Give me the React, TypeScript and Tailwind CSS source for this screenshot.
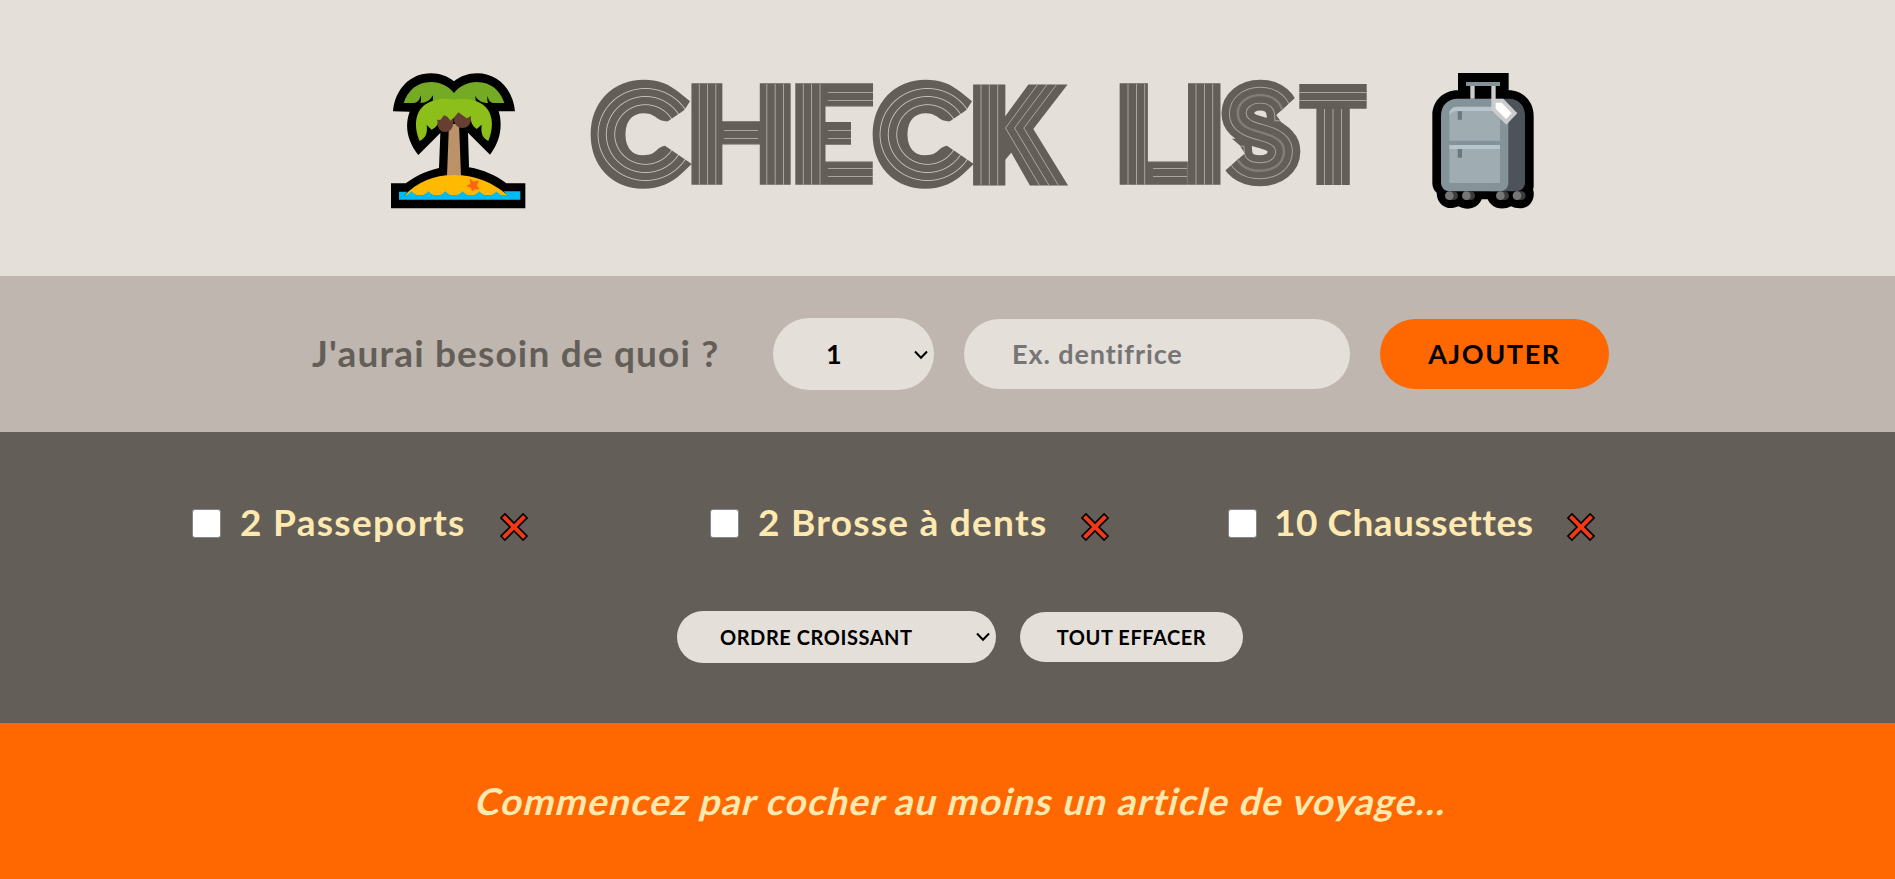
import React from "react";

const DARK = "#635f58";
const LIGHT = "#e5dfd9";
const GROOVE = "#aaa59e";

function PalmIsland() {
  return (
    <svg className="h-[180px] w-[180px] shrink-0" viewBox="0 0 540 540" aria-hidden="true">
      <path
        fill="#000"
        d="M69 184C75 118 120 70 183 70c27 0 51 9 69 24c18-15 42-24 69-24c63 0 108 48 114 114h-49c12 38 7 88-26 130l-66-66l3 104c44 8 79 23 112 48h57v75H63v-75h44c31-22 60-37 100-46l4-105l-66 66c-33-42-42-87-26-130z"
      />
      <path fill="#75aa25" d="M101 159c12-37 40-63 82-63c29 0 52 12 69 33c17-21 40-33 69-33c42 0 70 26 82 63h-32c-12-2-17-11-18-22c-2 10-1 16 1 22c-17 0-32-8-38-22c0 8 1 14 3 19H187c2-5 3-11 1-20c-6 15-20 23-37 23c2-7 3-13 0-23c-1 13-7 21-18 23z" />
      <path fill="#bc9269" d="M237 222h30l6 155h-42z" />
      <path fill="#643f32" d="M201 209l20-16l25 0c9 22 5 53-20 53c-15 0-26-14-25-37zM252 205l13-22l38 18c1 20-9 33-26 33c-15 0-26-11-25-29z" />
      <path fill="#8dbf1b" d="M149 273c-22-53-12-106 41-121c22-6 45-7 62-3c17-4 40-3 62 3c53 15 63 68 41 121c-18-10-23-23-20-49l-15 13c-13-9-19-21-17-38l-13 6l-25-18l-14 18c-4 2-7 4-9 7l-10-12l-10-4l-11 14l-10-1c5 12 1 21-16 30l-15-14c3 22-1 38-21 48z" />
      <path fill="#ffb900" d="M102 437c39-40 89-62 149-62c64 0 116 21 162 62z" />
      <path fill="#00bcf2" d="M87 425h25l-10 12q14-2 22-13q26 26 51 0q25 26 51 0q26 26 52 0q25 26 50 0q26 26 52 0q9 12 21 12l0 0h11l-12-12h51v25H87z" />
      <path fill="#ffb900" d="M380 412l33 24c-12 0-24-2-33-12z" />
      <path fill="#ff6210" stroke="#ff6210" strokeWidth="3" strokeLinejoin="round" d="M301 387l9 10l15-4l-6 13l8 11l-13-1l-7 7l-3-11l-12-4l11-6z" />
    </svg>
  );
}

function Suitcase() {
  return (
    <svg className="h-[180px] w-[180px] shrink-0" viewBox="0 0 540 540" aria-hidden="true">
      <path
        fill="#000"
        d="M174 69h152v52c42 0 75 32 75 76v215c-2 5-2 8 0 14c3 27-15 49-41 49c-11 0-20-2-27-6c-27 14-58 6-70-21h-18c-11 27-42 36-70 21c-31 15-65-3-65-41c-9-8-13-18-13-30V197c0-44 32-76 77-76z"
      />
      <path fill="#4c535b" d="M270 146h56c31 0 49 22 49 51v200c0 16-11 27-26 27h-79z" />
      <path fill="#849399" d="M173 146h103c31 0 49 22 49 51v200c0 16-10 27-26 27H150c-16 0-27-10-27-27V197c0-31 20-51 50-51z" />
      <path fill="#9facb2" d="M148 183h152v89H148zM148 297h152v102H148z" />
      <path fill="#b6c5cc" d="M148 195c0-16 8-25 23-25h129v13H171c-10 0-17 4-23 12zM148 285h152v12H148z" />
      <path fill="#69797e" d="M173 184h13v25h-13zM173 297h13v26h-13z" />
      <path fill="#ccc" d="M211 108h13v38h-13zM274 108h13v38h23l42 44l-33 34l-45-44z" />
      <path fill="#fff" d="M287 158h18l30 32l-17 17l-31-31z" />
      <path fill="#849399" d="M198 96h102v12H198z" />
      {[148, 199, 301, 351].map((x) => (
        <g key={x}>
          <path fill="#3b3b3b" d={`M${x} 424h13a13 13 0 0 1 0 26h-13z`} />
          <circle cx={x} cy="437" r="13" fill="#767676" />
        </g>
      ))}
    </svg>
  );
}

type BlockProps = { char: string; x: number; sx: number; wide?: boolean };

/* A heavy capital whose ink starts at x and stands on y = 185. */
function Block({ char, x, sx, wide }: BlockProps) {
  const size = wide ? 126.5 : 137.2;
  const outline = wide ? 9 : 1.4;
  return (
    <text
      transform={`translate(${x - 0.044 * size * sx + outline / 2} ${185 - outline / 2}) scale(${sx} 1)`}
      fontFamily="Inter, sans-serif"
      fontWeight="900"
      fontSize={size}
      fill={DARK}
      stroke={DARK}
      strokeWidth={outline}
    >
      {char}
    </text>
  );
}

function RoundC({ x, id }: { x: number; id: string }) {
  return (
    <g transform={`translate(${x - 1.2} 0) scale(1.03 1)`}>
      <defs>
        <radialGradient id={id} gradientUnits="userSpaceOnUse" cx="54" cy="134.5" r="60">
          {[29.8, 38, 46].flatMap((r) => [
            <stop key={r + "a"} offset={(r - 0.9) / 60} stopColor={DARK} />,
            <stop key={r + "b"} offset={r / 60} stopColor="#c4bfb8" />,
            <stop key={r + "c"} offset={(r + 0.9) / 60} stopColor={DARK} />,
          ])}
        </radialGradient>
        <clipPath id={id + "cut"}>
          <path d="M-6 70H109V98L57 134.5L109 171V200H-6z" />
        </clipPath>
      </defs>
      <g clipPath={`url(#${id}cut)`}>
        <text
          x="9.8"
          y="171.8"
          fontFamily="Lato, sans-serif"
          fontWeight="100"
          fontSize="105.5"
          fill={`url(#${id})`}
          stroke={`url(#${id})`}
          strokeWidth="32.5"
        >
          C
        </text>
      </g>
    </g>
  );
}

function Title() {
  const layers: [string, number][] = [
    [DARK, 28.5],
    [GROOVE, 14.4],
    [DARK, 12.6],
    ["#827e77", 0],
  ];
  return (
    <h1 className="shrink-0">
      <svg className="block h-[180px] w-[850px]" viewBox="550 50 850 180" role="img" aria-label="CHECK LIST">
        <defs>
          <clipPath id="cutS">
            <path d="M1215 70H1300V93.5L1276 115L1281 122L1292 130L1303 144V200H1240L1220.5 174.5L1245 153.5L1240 145.5L1230 137L1215 118z" />
          </clipPath>
          <clipPath id="cutT">
            <path d="M1299.3 84H1366.7V185H1299.3z" />
          </clipPath>
        </defs>
        <RoundC x={591} id="ringA" />
        <Block char="H" x={691} sx={1.085} />
        <Block char="E" x={795} sx={1.06} />
        <path d="M851 112h24v46h-24z" fill={LIGHT} />
        <RoundC x={873} id="ringB" />
        <Block char="K" x={972.5} sx={0.95} wide />
        <Block char="L" x={1119.3} sx={0.99} />
        <Block char="I" x={1187.8} sx={1.14} />
        <g clipPath="url(#cutS)">
          {layers.map(([color, width]) => (
            <text
              key={color + width}
              transform="translate(1226.3 171.3) scale(1.06 1)"
              fontFamily="Inter, sans-serif"
              fontWeight="100"
              fontSize="104"
              fill={color}
              stroke={width ? color : "none"}
              strokeWidth={width}
            >
              S
            </text>
          ))}
        </g>
        <g clipPath="url(#cutT)">
          <text
            x="1333"
            y="197"
            textAnchor="middle"
            fontFamily="Lato, sans-serif"
            fontWeight="100"
            fontSize="150"
            fill={DARK}
            stroke={DARK}
            strokeWidth="31.6"
          >
            T
          </text>
        </g>
        <g fill="none" stroke={GROOVE} strokeWidth="1">
          <path d="M699.3 84v101M707.5 84v101M715.8 84v101M766.8 84v101M775.2 84v101M783.5 84v101M724 130.5h34M724 138.5h34" />
          <path d="M803.3 84v101M811.5 84v101M820 84v101M828 92.5h45M828 100.5h45M828 130.5h23M828 138.5h23M828 168.5h45M828 176.5h45" />
          <path d="M981 84v101M989.3 84v101M997.7 84v101M1038 84L1005.5 128L1039.3 185M1047.5 84L1014.5 128L1048.8 185M1057 84L1023.8 128L1058.2 185" />
          <path d="M1128 84v101M1136.5 84v101M1144.7 84v101M1153 168.5h34M1153 176.5h34" />
          <path d="M1196 84v101M1204.5 84v101M1212.7 84v101" />
          <path d="M1299 92.5h68M1299 100.5h68M1324.5 109v76M1333 109v76M1341.5 109v76" />
        </g>
      </svg>
    </h1>
  );
}

const items = [
  { id: 1, label: "2 Passeports", spacing: "tracking-[1.3px]" },
  { id: 2, label: "2 Brosse à dents", spacing: "tracking-[1.25px]" },
  { id: 3, label: "10 Chaussettes", spacing: "tracking-[0.5px] -ml-[2px]" },
];

function DeleteIcon() {
  return (
    <svg className="block h-[28px] w-[28px]" viewBox="0 0 28 28" aria-hidden="true">
      <path
        d="M4.9 .9L14 10L23.1 .9L27.1 4.9L18 14L27.1 23.1L23.1 27.1L14 18L4.9 27.1L.9 23.1L10 14L.9 4.9z"
        fill="#f03a17"
        stroke="#000"
        strokeWidth="1.6"
      />
    </svg>
  );
}

function Chevron({ className }: { className: string }) {
  return (
    <svg className={`pointer-events-none absolute h-[10px] w-[14px] ${className}`} viewBox="0 0 14 10" aria-hidden="true">
      <path d="M1 1.5l6 6.3l6-6.3" fill="none" stroke="#000" strokeWidth="2" />
    </svg>
  );
}

export default function App() {
  return (
    <div className="flex h-[879px] w-full flex-col font-['Lato',sans-serif] font-bold">
      <header className="flex h-[276px] items-start bg-[#e5dfd9] pt-[50px] pl-[370px]">
        <PalmIsland />
        <Title />
        <Suitcase />
      </header>

      <form className="flex h-[156px] items-center bg-[#beb6af] pl-[312px]" onSubmit={(e) => e.preventDefault()}>
        <h3 className="-mt-[2px] w-[461px] shrink-0 text-[37px] leading-[42px] tracking-[1.17px] whitespace-nowrap text-[#635f58]">
          J'aurai besoin de quoi ?
        </h3>
        <div className="relative shrink-0">
          <select className="block h-[72px] w-[161px] appearance-none rounded-full bg-[#e5dfd9] pl-[53px] text-[27px] text-black">
            <option>1</option>
          </select>
          <Chevron className="top-[32px] left-[141px]" />
        </div>
        <input
          className="ml-[30px] h-[70px] w-[386px] shrink-0 rounded-full bg-[#e5dfd9] px-[48px] pb-[2px] text-[27px] tracking-[0.9px] placeholder:text-[#757575]"
          placeholder="Ex. dentifrice"
        />
        <button className="ml-[30px] h-[70px] w-[229px] shrink-0 rounded-full bg-[#ff6700] text-[27px] tracking-[1.6px] text-black">
          AJOUTER
        </button>
      </form>

      <main className="flex h-[291px] flex-col bg-[#635f58] pt-[68px]">
        <ul className="grid h-[44px] grid-cols-[518px_518px_518px] pl-[192px]">
          {items.map((item) => (
            <li key={item.id} className="flex items-center">
              <span
                className="mt-[2px] mr-[19px] h-[29px] w-[29px] rounded-[3px] border border-[#85868a] bg-white"
                role="checkbox"
                aria-checked="false"
              />
              <span className={`${item.spacing} -mt-px text-[37px] leading-[44px] whitespace-nowrap text-[#ffe9b1]`}>{item.label}</span>
              <button className="mt-[10px] ml-[34px]" aria-label="Supprimer">
                <DeleteIcon />
              </button>
            </li>
          ))}
        </ul>
        <div className="mt-[67px] flex items-center pl-[677px]">
          <div className="relative">
            <select className="block h-[52px] w-[319px] appearance-none rounded-full bg-[#e5dfd9] pl-[43px] text-[20px] tracking-[0.55px] text-black">
              <option>ORDRE CROISSANT</option>
            </select>
            <Chevron className="top-[21px] left-[299px]" />
          </div>
          <button className="ml-[24px] h-[50px] w-[223px] rounded-full bg-[#e5dfd9] text-[20px] tracking-[0.55px] text-black">
            TOUT EFFACER
          </button>
        </div>
      </main>

      <footer className="flex h-[156px] items-center justify-center bg-[#ff6700] pl-[31px]">
        <h3 className="-skew-x-[14deg] text-[37px] leading-[44px] tracking-[1.3px] whitespace-nowrap text-[#ffe9b1]">
          Commencez par cocher au moins un article de voyage...
        </h3>
      </footer>
    </div>
  );
}
